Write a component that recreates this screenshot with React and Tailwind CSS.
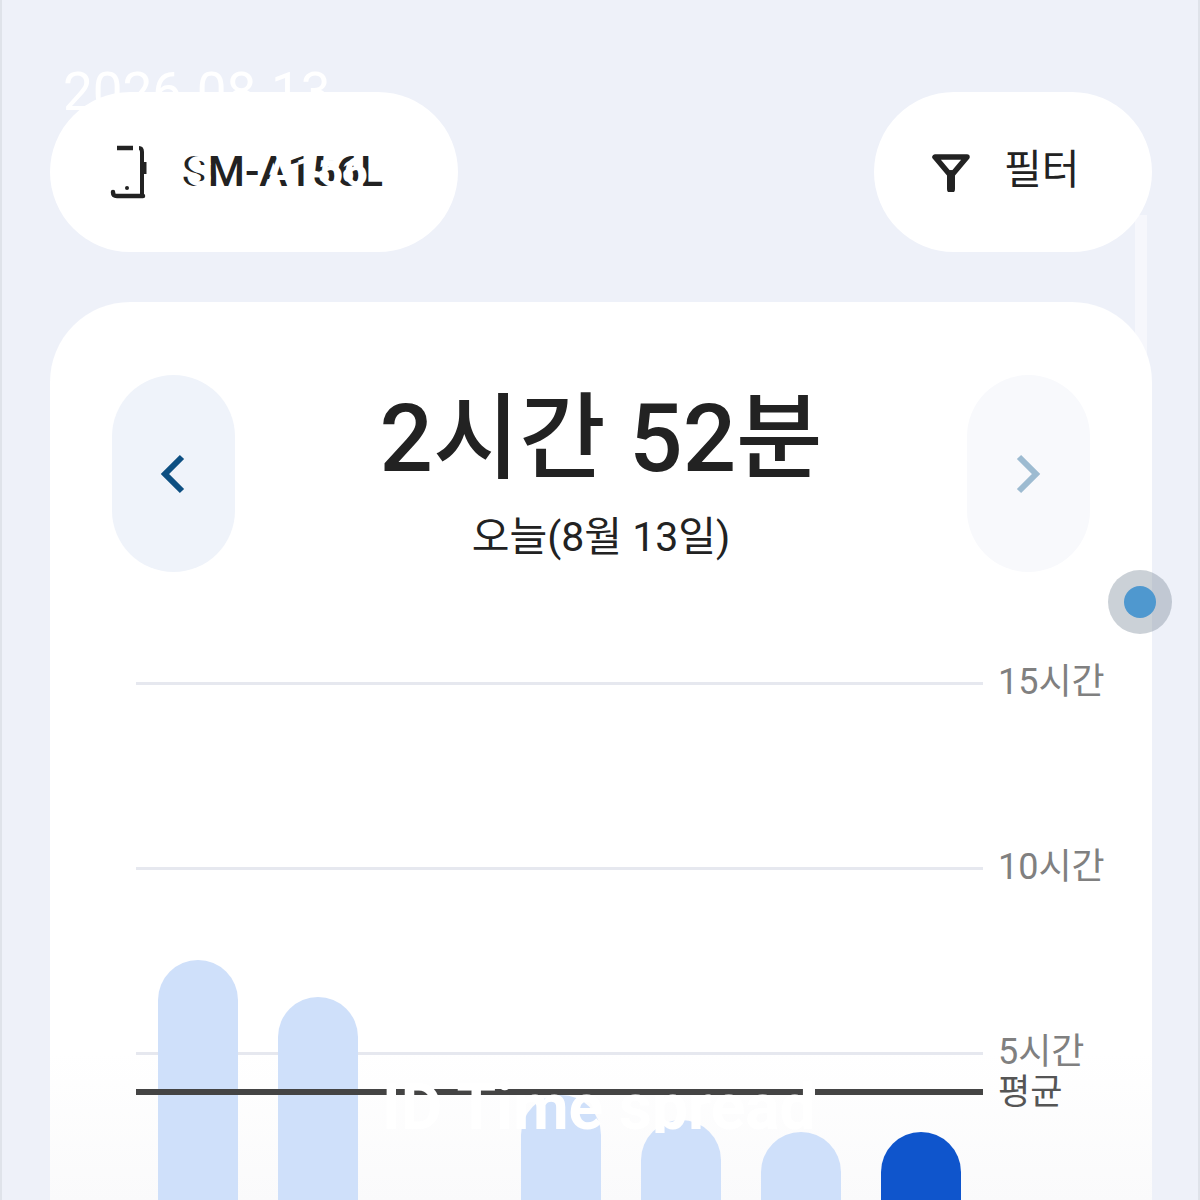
const GRID_ROWS = ['15시간', '10시간', '5시간'];

// height in px above the bottom of the chart layer, the third day has no bar
const BARS = [
  { h: 279, left: 158 },
  { h: 242, left: 278 },
  { h: 144, left: 521 },
  { h: 119, left: 641 },
  { h: 107, left: 761 },
  { h: 107, left: 881, active: true },
];

function PhoneIcon() {
  // the left edge is really hidden in the reference, white ghost text sits over it
  return (
    <svg width="38" height="54" viewBox="0 0 38 54" fill="none" className="shrink-0">
      <path d="M7 3H23" stroke="#222" strokeWidth="4.5" />
      <path d="M29 3Q32 3 32 7V50" stroke="#222" strokeWidth="4" />
      <path d="M3 47C3 50 4 51 7 51H33" stroke="#222" strokeWidth="4.5" strokeLinecap="round" />
      <path d="M35 17V29" stroke="#222" strokeWidth="3" />
      <circle cx="17" cy="43" r="2" fill="#222" />
    </svg>
  );
}

function FilterIcon() {
  return (
    <svg width="38" height="38" viewBox="0 0 38 38" fill="none" className="mt-[2px] ml-[1px] shrink-0">
      <path d="M3 3H35L19 22Z" stroke="#222" strokeWidth="5.5" strokeLinejoin="round" />
      <path d="M19 20V35" stroke="#222" strokeWidth="8" strokeLinecap="round" />
    </svg>
  );
}

function Chevron({ dir, color }) {
  return (
    <svg width="28" height="40" viewBox="0 0 28 40" fill="none">
      <path
        d={dir === 'left' ? 'M22 3L5 20L22 37' : 'M4 3L21 20L4 37'}
        stroke={color}
        strokeWidth="6"
      />
    </svg>
  );
}

export default function App() {
  return (
    <div className="relative h-[1200px] w-[1200px] overflow-hidden border-x-2 border-[#dfe3ea] bg-[#eef1f9] pl-[48px] pr-[46px] pt-[92px] font-[Roboto,'Noto_Sans_CJK_KR',sans-serif]">
      {/* ghost date left behind the pills */}
      <div className="absolute left-[61px] top-[60px] text-[53px] leading-[64px] text-white">2026-08-13</div>
      {/* scrollbar track */}
      <div className="absolute left-[1133px] top-[215px] h-[200px] w-[12px] bg-[#f6f7fc]" />

      {/* Top pills */}
      <div className="relative flex justify-between">
        <div className="flex h-[160px] w-[408px] items-center rounded-full bg-white pl-[60px]">
          <PhoneIcon />
          <div className="relative ml-[34px] whitespace-nowrap text-[42.5px] font-medium leading-none text-[#222]">
            SM-A156L
            <div className="absolute left-[4px] top-0 font-bold text-white">
              S<span className="text-transparent">M-</span>A156<span className="text-transparent">L</span>
            </div>
          </div>
        </div>
        <div className="flex h-[160px] w-[278px] items-center rounded-full bg-white pl-[57px]">
          <FilterIcon />
          <span className="mb-[4px] ml-[34px] text-[41px] leading-none text-[#222]">필터</span>
        </div>
      </div>

      {/* Main card */}
      <div className="relative mt-[50px] h-[1000px] rounded-[80px] bg-[linear-gradient(to_bottom,#ffffff_0%,#ffffff_75%,#fafafb_90%)] px-[62px] pt-[73px]">
        <div className="flex justify-between">
          <div className="flex h-[197px] w-[123px] items-center justify-center rounded-full bg-[#eff3fa]">
            <Chevron dir="left" color="#0d4f82" />
          </div>
          <div className="flex flex-col items-center pt-[12px] text-[#222]">
            <div className="text-[94px] font-medium leading-[104px]">2시간 52분</div>
            <div className="mt-[21px] text-[41px] leading-[50px]">오늘(8월 13일)</div>
          </div>
          <div className="flex h-[197px] w-[123px] items-center justify-center rounded-full bg-[#f8f9fc]">
            <Chevron dir="right" color="#9dbbd1" />
          </div>
        </div>

        {/* Chart */}
        <div className="relative mt-[19px] pl-[24px]">
          {GRID_ROWS.map((label) => (
            <div key={label} className="flex h-[185px] items-center">
              <div className="h-[3px] w-[847px] shrink-0 bg-[#e6e8ef]" />
              <span className="mb-[4px] ml-[15px] whitespace-nowrap text-[36px] leading-none text-[#808080]">{label}</span>
            </div>
          ))}

          {/* bars, cut off by the bottom of the window */}
          <div className="absolute left-0 top-[248px] h-[400px] w-full">
            {BARS.map((bar) => (
              <div
                key={bar.left}
                className={`absolute bottom-0 w-[80px] rounded-t-[40px] ${bar.active ? 'bg-[#0f55cc]' : 'bg-[#cfe0fa]'}`}
                style={{ left: bar.left - 112, height: bar.h }}
              />
            ))}
          </div>

          {/* average line */}
          <div className="absolute left-[24px] top-[498px] flex w-[847px] items-center gap-[12px]">
            <div className="h-[6px] flex-1 bg-[#444]" />
            <div className="h-[6px] w-[168px] bg-[#444]" />
          </div>
          <span className="absolute left-[886px] top-[484px] text-[35px] leading-none text-[#555]">평균</span>

          {/* ghost title over the chart */}
          <div className="absolute left-[270px] top-[479px] h-[63px] overflow-hidden whitespace-nowrap text-[64px] font-bold leading-[76px] text-white">
            ID Time spread
          </div>
        </div>
      </div>

      {/* touch indicator */}
      <div className="absolute left-[1106px] top-[570px] flex h-[64px] w-[64px] items-center justify-center rounded-full bg-[#7e8c9c]/40">
        <div className="h-[32px] w-[32px] rounded-full bg-[#4f98cf]" />
      </div>
    </div>
  );
}
